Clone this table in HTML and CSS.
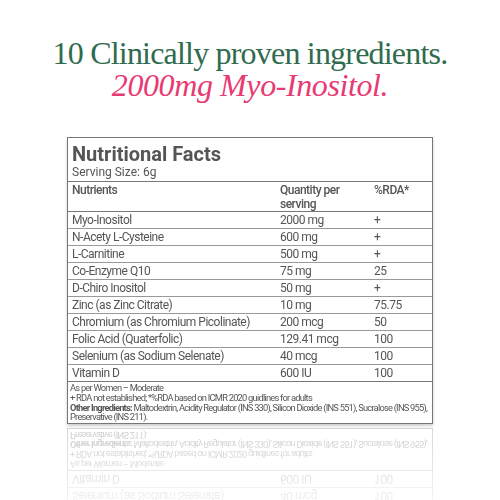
FILE: index.html
```html
<html>
  <head>
    <meta name="viewport" content="width=device-width, initial-scale=1.0">
    <title>Nutritional Facts</title>
    <link rel="stylesheet" href="styles.css">
  </head>
  <body>
    <h1 class="headline">
      <span class="lead">10 Clinically proven ingredients.</span>
      <span class="accent">2000mg Myo-Inositol.</span>
    </h1>

    <div class="facts">
      <div class="facts-title">
        <h2>Nutritional Facts</h2>
        <div class="serving">Serving Size: 6g</div>
      </div>
      <table class="facts-table">
        <tr class="head">
          <td>Nutrients</td>
          <td>Quantity per<br>serving</td>
          <td>%RDA*</td>
        </tr>
        <tr><td>Myo-Inositol</td><td>2000 mg</td><td>+</td></tr>
        <tr><td>N-Acety L-Cysteine</td><td>600 mg</td><td>+</td></tr>
        <tr><td>L-Carnitine</td><td>500 mg</td><td>+</td></tr>
        <tr><td>Co-Enzyme Q10</td><td>75 mg</td><td>25</td></tr>
        <tr><td>D-Chiro Inositol</td><td>50 mg</td><td>+</td></tr>
        <tr><td>Zinc (as Zinc Citrate)</td><td>10 mg</td><td>75.75</td></tr>
        <tr><td>Chromium (as Chromium Picolinate)</td><td>200 mcg</td><td>50</td></tr>
        <tr><td>Folic Acid (Quaterfolic)</td><td>129.41 mcg</td><td>100</td></tr>
        <tr><td>Selenium (as Sodium Selenate)</td><td>40 mcg</td><td>100</td></tr>
        <tr><td>Vitamin D</td><td>600 IU</td><td>100</td></tr>
      </table>
      <div class="notes">
        As per Women &ndash; Moderate<br>
        + RDA not established; *%RDA based on ICMR 2020 guidlines for adults<br>
        <b>Other Ingredients:</b> Maltodextrin, Acidity Regulator (INS 330), Silicon Dioxide (INS 551), Sucralose (INS 955), Preservative (INS 211).
      </div>
    </div>
  </body>
</html>
```

FILE: styles.css
```css
html, body {
  margin: 0;
  background: #fff;
}
body {
  display: flex;
  flex-direction: column;
  align-items: center;
  font-family: Roboto, "Liberation Sans", sans-serif;
  color: #555;
}

.headline {
  margin: 37px 0 0;
  display: flex;
  flex-direction: column;
  align-items: center;
  font-family: "Liberation Serif", serif;
  font-weight: normal;
  font-size: 32px;
  line-height: 32px;
  letter-spacing: -0.8px;
}
.headline .lead {
  color: #2f6b4e;
}
.headline .accent {
  color: #e83a73;
  font-style: italic;
  letter-spacing: -0.4px;
}

.facts {
  width: 364px;
  margin-top: 36px;
  border: 1px solid #777;
  box-shadow: 0 2px 3px rgba(0,0,0,0.2);
  -webkit-box-reflect: below 4px linear-gradient(transparent 65%, rgba(255,255,255,0.3));
}
.facts-title {
  padding: 5px 4px 2px;
  border-bottom: 1px solid #777;
}
.facts-title h2 {
  margin: 0;
  font-size: 20px;
  line-height: 22px;
  font-weight: bold;
}
.serving {
  font-size: 12px;
  line-height: 14px;
}

.facts-table {
  width: 100%;
  border-collapse: collapse;
  font-size: 12px;
  letter-spacing: -0.5px;
}
.facts-table td {
  padding: 1px 4px 0;
  height: 17px;
  line-height: 14px;
  border-bottom: 1px solid #999;
  vertical-align: top;
}
.facts-table td:nth-child(1) { width: 200px; }
.facts-table td:nth-child(2) { width: 86px; }
.facts-table .head td {
  height: 26px;
  font-weight: 500;
  border-bottom: 1px solid #777;
}
.facts-table tr:last-child td {
  border-bottom: 1px solid #777;
}

.notes {
  padding: 1px 1px 1px 2px;
  font-size: 9.3px;
  line-height: 9.8px;
  letter-spacing: -0.76px;
}
.notes b {
  font-weight: bold;
}
```
